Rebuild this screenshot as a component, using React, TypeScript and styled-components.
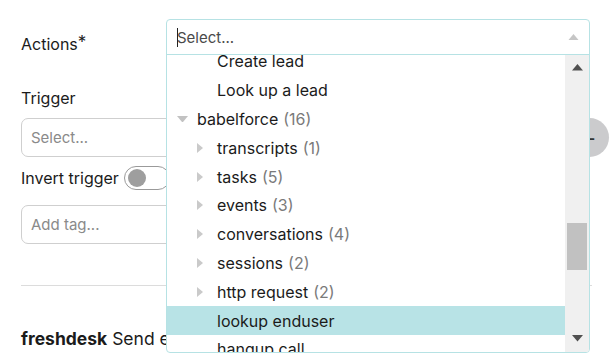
import styled, { createGlobalStyle } from "styled-components"

const GlobalStyle = createGlobalStyle`
    html, body {
        margin: 0;
        padding: 0;
        background: #ffffff;
    }
    body {
        font-family: Inter, "Noto Sans", "DejaVu Sans", sans-serif;
        color: #1b1b1b;
        overflow: hidden;
    }
`

const Page = styled.div`
    position: relative;
    width: 613px;
    height: 361px;
    overflow: hidden;
`
const Form = styled.div`
    display: flex;
    flex-direction: column;
    padding: 19px 0 0 21px;
`
const ActionsRow = styled.div`
    display: flex;
    align-items: center;
    height: 48px;
`
const Label = styled.div`
    font-size: 16px;
    line-height: 20px;
`
const Star = styled.span`
    vertical-align: 2px;
    font-size: 17px;
`
const TriggerLabel = styled(Label)`
    margin-top: 21px;
`
const SelectRow = styled.div`
    display: flex;
    align-items: center;
    gap: 8px;
    margin-top: 10px;
`
const Input = styled.div`
    box-sizing: border-box;
    width: ${props => props.$width}px;
    height: 39px;
    border: 1px solid #cfcfcf;
    border-radius: 7px;
    display: flex;
    align-items: center;
    padding-left: 9px;
    font-size: 15px;
    color: #8a8a8a;
`
const RemoveButton = styled.div`
    width: 39px;
    height: 39px;
    border-radius: 50%;
    background: #cbcbcd;
    display: flex;
    align-items: center;
    justify-content: center;
    font-size: 20px;
    color: #333;
`
const ToggleRow = styled.div`
    display: flex;
    align-items: center;
    gap: 5px;
    margin-top: 9px;
`
const Toggle = styled.div`
    box-sizing: border-box;
    width: 46px;
    height: 24px;
    border: 1px solid #9a9a9a;
    border-radius: 12px;
    padding: 2px 3px;
    display: flex;
    align-items: center;
`
const Knob = styled.div`
    width: 18px;
    height: 18px;
    border-radius: 50%;
    background: #9e9e9e;
`
const TagInput = styled(Input)`
    margin-top: 15px;
`
const Divider = styled.div`
    height: 1px;
    background: #dcdcdc;
    margin-top: 41px;
    margin-right: 21px;
`
const ActionTitle = styled.div`
    margin-top: 43px;
    font-size: 17.5px;
    line-height: 20px;
`
const Brand = styled.b`
    font-weight: 700;
`

/* open select menu, lies over the form */
const Menu = styled.div`
    position: absolute;
    left: 166px;
    top: 19px;
    width: 424px;
    height: 334px;
    box-sizing: border-box;
    border: 1px solid #b6e2e4;
    border-radius: 4px;
    background: #fff;
    display: flex;
    flex-direction: column;
    overflow: hidden;
`
const MenuHeader = styled.div`
    height: 34px;
    border-bottom: 1px solid #b6e2e4;
    display: flex;
    align-items: center;
    padding: 0 10px 0 10px;
    font-size: 15px;
    color: #4a4a4a;
`
const Cursor = styled.span`
    display: inline-block;
    width: 1px;
    height: 19px;
    background: #222;
    margin-right: -1px;
`
const HeaderText = styled.span`
    flex: 1;
`
const MenuBody = styled.div`
    flex: 1;
    display: flex;
    min-height: 0;
`
const List = styled.div`
    flex: 1;
    overflow: hidden;
`
const ListInner = styled.div`
    margin-top: -8px;
`
const Row = styled.div`
    height: 28.8px;
    display: flex;
    align-items: center;
    padding-left: ${props => props.$depth * 20 - 10}px;
    background: ${props => (props.$active ? "#b8e3e6" : "transparent")};
    font-size: 16px;
    color: #1b1b1b;
    white-space: nowrap;
`
const CaretBox = styled.div`
    width: 20px;
    display: flex;
    align-items: center;
`
const Count = styled.span`
    color: #7a7a7a;
    margin-left: 5px;
`
const Scrollbar = styled.div`
    width: 24px;
    background: #f0f0f0;
    display: flex;
    flex-direction: column;
    align-items: center;
    padding: 9px 0 10px;
    box-sizing: border-box;
`
const Track = styled.div`
    flex: 1;
    width: 100%;
    display: flex;
    flex-direction: column;
    padding-top: 152px;
    box-sizing: border-box;
`
const Thumb = styled.div`
    height: 47px;
    margin: 0 2px;
    background: #c1c1c1;
`

const Triangle = ({ dir, color, size }: { dir: "up" | "down" | "right"; color: string; size: number }) => {
    const points =
        dir === "up" ? "0,6 5,0 10,6" : dir === "down" ? "0,0 10,0 5,6" : "0,0 6,5 0,10"
    const w = dir === "right" ? 6 : 10
    const h = dir === "right" ? 10 : 6
    return (
        <svg width={(w * size) / 10} height={(h * size) / 10} viewBox={`0 0 ${w} ${h}`}>
            <polygon points={points} fill={color} />
        </svg>
    )
}

interface IItem {
    name: string;
    depth: number;
    count?: number;
    caret?: "down" | "right";
    active?: boolean;
}

const items: IItem[] = [
    { name: "Create lead", depth: 2 },
    { name: "Look up a lead", depth: 2 },
    { name: "babelforce", depth: 1, count: 16, caret: "down" },
    { name: "transcripts", depth: 2, count: 1, caret: "right" },
    { name: "tasks", depth: 2, count: 5, caret: "right" },
    { name: "events", depth: 2, count: 3, caret: "right" },
    { name: "conversations", depth: 2, count: 4, caret: "right" },
    { name: "sessions", depth: 2, count: 2, caret: "right" },
    { name: "http request", depth: 2, count: 2, caret: "right" },
    { name: "lookup enduser", depth: 2, active: true },
    { name: "hangup call", depth: 2 },
]

function App() {
    return (
        <>
            <GlobalStyle />
            <Page>
                <Form>
                    <ActionsRow>
                        <Label>
                            Actions<Star>*</Star>
                        </Label>
                    </ActionsRow>
                    <TriggerLabel>Trigger</TriggerLabel>
                    <SelectRow>
                        <Input $width={541}>Select...</Input>
                        <RemoveButton>−</RemoveButton>
                    </SelectRow>
                    <ToggleRow>
                        <Label>Invert trigger</Label>
                        <Toggle>
                            <Knob />
                        </Toggle>
                    </ToggleRow>
                    <TagInput $width={541}>Add tag...</TagInput>
                    <Divider />
                    <ActionTitle>
                        <Brand>freshdesk</Brand> Send email
                    </ActionTitle>
                </Form>

                <Menu>
                    <MenuHeader>
                        <Cursor />
                        <HeaderText>Select...</HeaderText>
                        <Triangle dir="up" color="#c6c6c6" size={11} />
                    </MenuHeader>
                    <MenuBody>
                        <List>
                            <ListInner>
                                {items.map((item, index) => (
                                    <Row key={index} $depth={item.depth} $active={item.active}>
                                        <CaretBox>
                                            {item.caret && (
                                                <Triangle
                                                    dir={item.caret}
                                                    color={item.caret === "down" ? "#c2c2c2" : "#cacaca"}
                                                    size={item.caret === "down" ? 11 : 10}
                                                />
                                            )}
                                        </CaretBox>
                                        {item.name}
                                        {item.count !== undefined && <Count>({item.count})</Count>}
                                    </Row>
                                ))}
                            </ListInner>
                        </List>
                        <Scrollbar>
                            <Triangle dir="up" color="#505050" size={11} />
                            <Track>
                                <Thumb />
                            </Track>
                            <Triangle dir="down" color="#505050" size={11} />
                        </Scrollbar>
                    </MenuBody>
                </Menu>
            </Page>
        </>
    )
}

export default App
